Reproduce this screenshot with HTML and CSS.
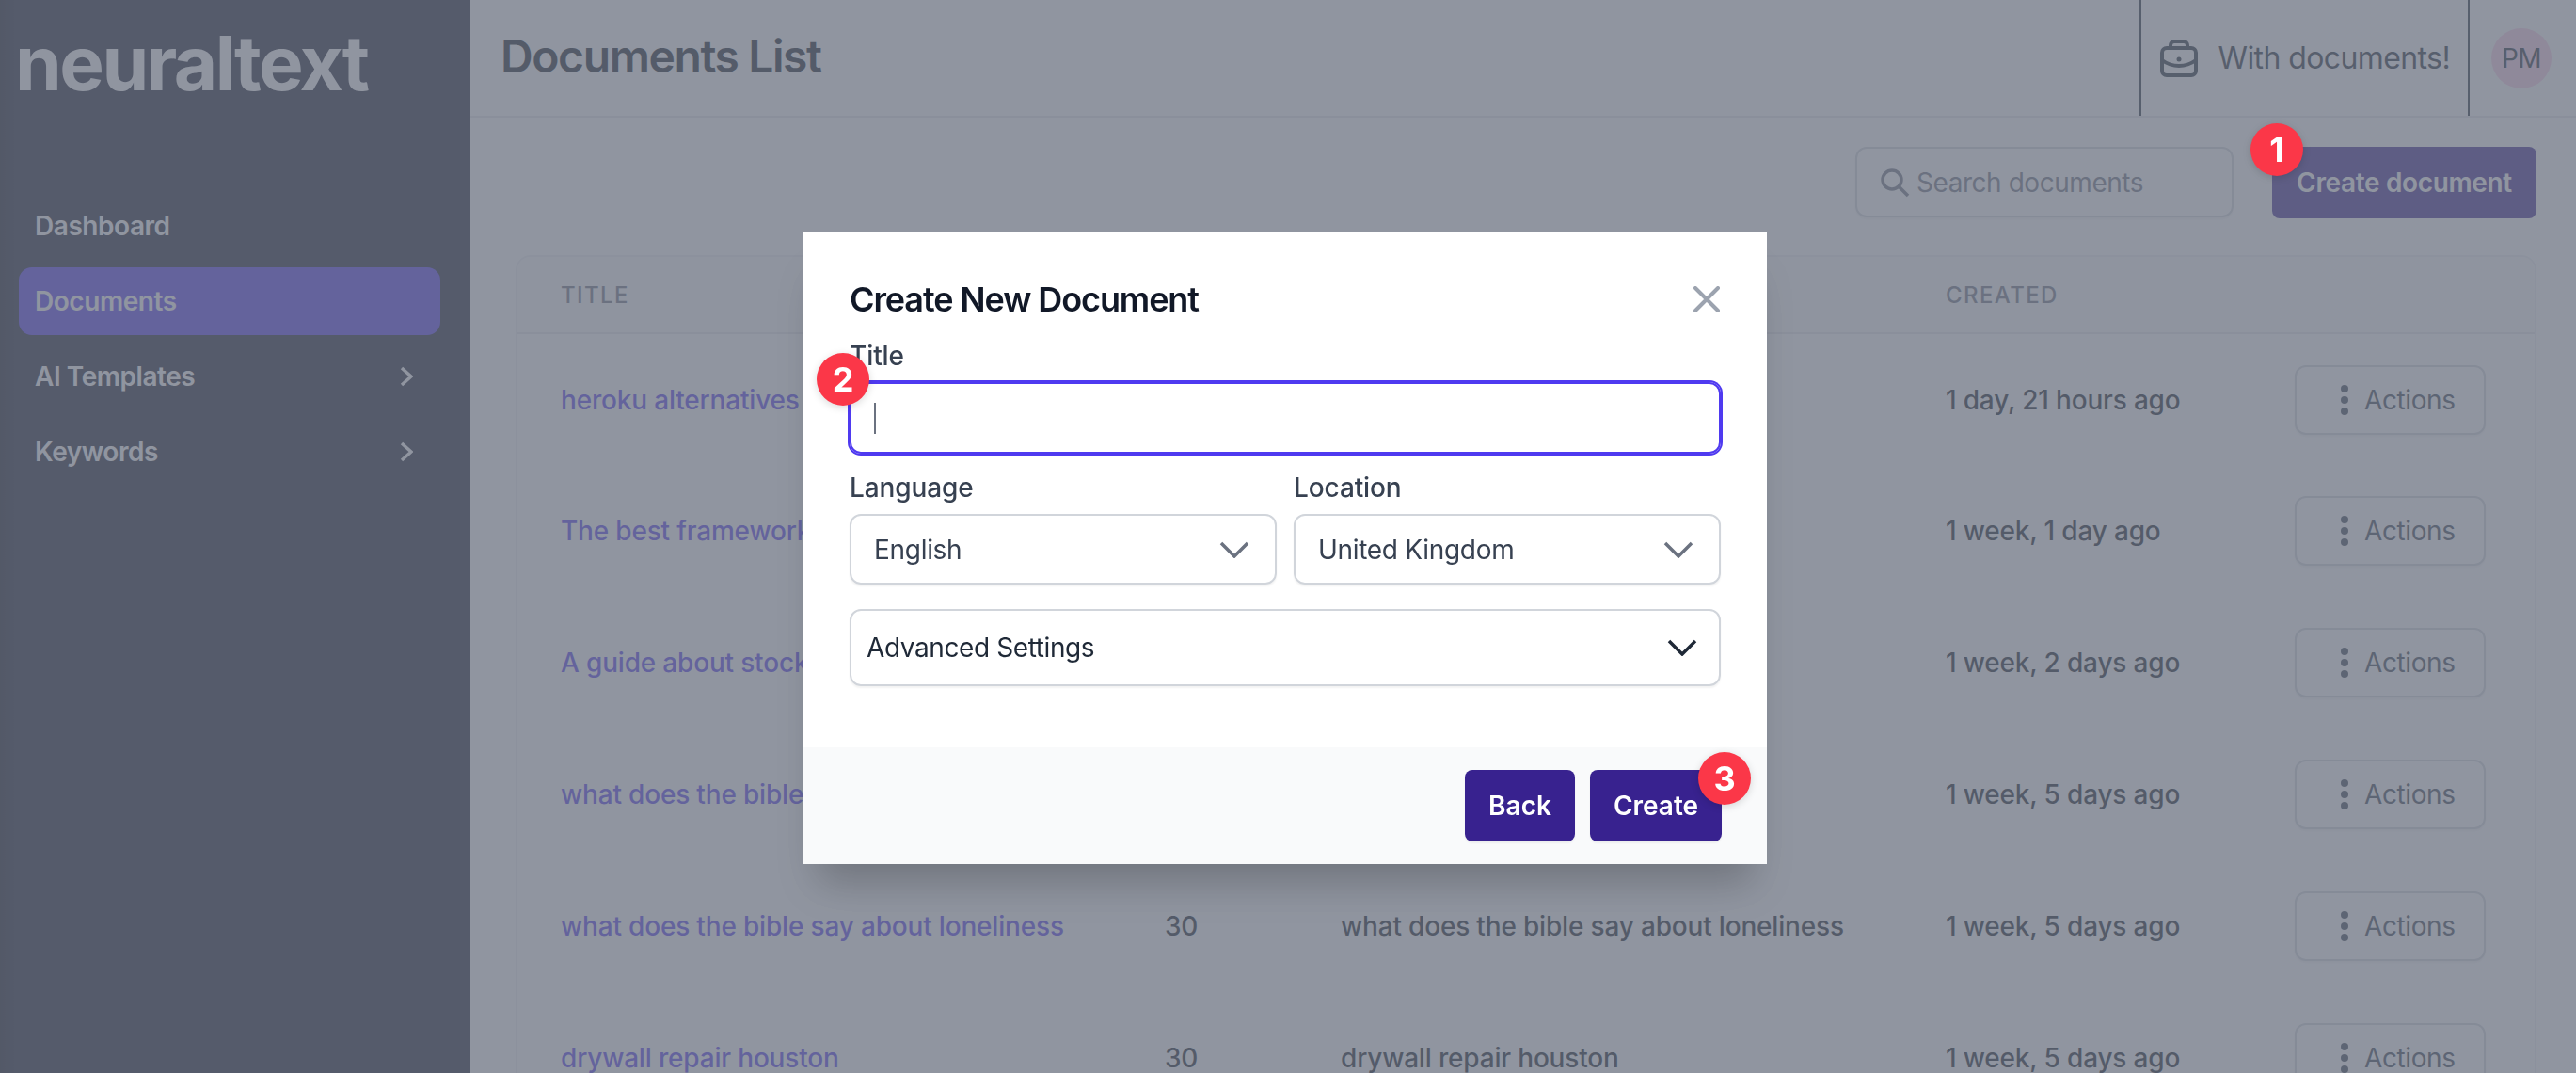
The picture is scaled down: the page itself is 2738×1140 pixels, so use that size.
FILE: index.html
```html
<!DOCTYPE html>
<html lang="en">
<head>
    <meta charset="UTF-8">
    <meta name="viewport" content="width=device-width, initial-scale=1.0">
    <title>neuraltext - Documents List</title>
    <link rel="stylesheet" href="styles.css">
</head>
<body>
    <div class="app">
        <aside class="sidebar">
            <div class="logo">neuraltext</div>
            <nav class="nav">
                <a class="nav-item">Dashboard</a>
                <a class="nav-item active">Documents</a>
                <a class="nav-item">AI Templates
                    <svg class="nav-chevron" viewBox="0 0 14 22"><path d="M2 2l10 9-10 9"/></svg>
                </a>
                <a class="nav-item">Keywords
                    <svg class="nav-chevron" viewBox="0 0 14 22"><path d="M2 2l10 9-10 9"/></svg>
                </a>
            </nav>
        </aside>

        <main class="main">
            <header class="topbar">
                <h1 class="page-title">Documents List</h1>
                <div class="workspace">
                    <svg class="briefcase" viewBox="0 0 40 40">
                        <rect x="2" y="9" width="36" height="29" rx="5"/>
                        <path d="M11 9V6a4 4 0 0 1 4-4h10a4 4 0 0 1 4 4v3"/>
                        <path d="M2 22c11 8 25 8 36 0"/>
                        <circle class="briefcase-dot" cx="20" cy="21" r="2.5"/>
                    </svg>
                    <span>With documents!</span>
                </div>
                <div class="account">
                    <div class="avatar">PM</div>
                </div>
            </header>

            <div class="toolbar">
                <div class="search">
                    <svg class="search-icon" viewBox="0 0 32 32"><circle cx="13" cy="13" r="10"/><path d="M20 20l10 10"/></svg>
                    <span>Search documents</span>
                </div>
                <button class="btn-primary">Create document</button>
            </div>

            <div class="card">
                <table class="doc-table">
                    <colgroup>
                        <col class="col-title">
                        <col class="col-words">
                        <col class="col-keyword">
                        <col class="col-created">
                        <col>
                    </colgroup>
                    <thead>
                        <tr>
                            <th>Title</th>
                            <th>Words</th>
                            <th>Keyword</th>
                            <th>Created</th>
                            <th></th>
                        </tr>
                    </thead>
                    <tbody>
                        <tr>
                            <td><a>heroku alternatives</a></td>
                            <td>30</td>
                            <td>heroku alternatives</td>
                            <td>1 day, 21 hours ago</td>
                            <td><button class="btn-actions"><span class="dots"><i></i><i></i><i></i></span>Actions</button></td>
                        </tr>
                        <tr>
                            <td><a>The best frameworks</a></td>
                            <td>30</td>
                            <td>best frameworks</td>
                            <td>1 week, 1 day ago</td>
                            <td><button class="btn-actions"><span class="dots"><i></i><i></i><i></i></span>Actions</button></td>
                        </tr>
                        <tr>
                            <td><a>A guide about stocks</a></td>
                            <td>30</td>
                            <td>stocks guide</td>
                            <td>1 week, 2 days ago</td>
                            <td><button class="btn-actions"><span class="dots"><i></i><i></i><i></i></span>Actions</button></td>
                        </tr>
                        <tr>
                            <td><a>what does the bible say about lies</a></td>
                            <td>30</td>
                            <td>what does the bible say about lies</td>
                            <td>1 week, 5 days ago</td>
                            <td><button class="btn-actions"><span class="dots"><i></i><i></i><i></i></span>Actions</button></td>
                        </tr>
                        <tr>
                            <td><a>what does the bible say about loneliness</a></td>
                            <td>30</td>
                            <td>what does the bible say about loneliness</td>
                            <td>1 week, 5 days ago</td>
                            <td><button class="btn-actions"><span class="dots"><i></i><i></i><i></i></span>Actions</button></td>
                        </tr>
                        <tr>
                            <td><a>drywall repair houston</a></td>
                            <td>30</td>
                            <td>drywall repair houston</td>
                            <td>1 week, 5 days ago</td>
                            <td><button class="btn-actions"><span class="dots"><i></i><i></i><i></i></span>Actions</button></td>
                        </tr>
                    </tbody>
                </table>
            </div>
        </main>
    </div>

    <div class="overlay">
        <span class="badge badge-one">1</span>

        <div class="modal">
            <div class="modal-body">
                <div class="modal-head">
                    <h2 class="modal-title">Create New Document</h2>
                    <svg class="modal-close" viewBox="0 0 28 28"><path d="M2 2l24 24M26 2L2 26"/></svg>
                </div>

                <label class="field-label field-label-title">Title</label>
                <div class="title-input">
                    <span class="badge badge-two">2</span>
                    <span class="caret"></span>
                </div>

                <div class="field-row">
                    <div class="field">
                        <label class="field-label">Language</label>
                        <div class="select">English
                            <svg class="chevron" viewBox="0 0 32 18"><path d="M2 2l14 14L30 2"/></svg>
                        </div>
                    </div>
                    <div class="field">
                        <label class="field-label">Location</label>
                        <div class="select">United Kingdom
                            <svg class="chevron" viewBox="0 0 32 18"><path d="M2 2l14 14L30 2"/></svg>
                        </div>
                    </div>
                </div>

                <div class="advanced">Advanced Settings
                    <svg class="chevron chevron-dark" viewBox="0 0 32 18"><path d="M2 2l14 14L30 2"/></svg>
                </div>
            </div>

            <div class="modal-foot">
                <button class="btn-modal btn-back">Back</button>
                <button class="btn-modal btn-create">Create
                    <span class="badge badge-three">3</span>
                </button>
            </div>
        </div>
    </div>
</body>
</html>
```

FILE: styles.css
```css
* {
    box-sizing: border-box;
}

html, body {
    height: 100%;
}

body {
    margin: 0;
    font-family: Inter, "Liberation Sans", sans-serif;
    font-size: 28px;
    color: #111827;
    background-color: #fff;
    overflow: hidden;
}

button {
    font-family: inherit;
    font-size: 28px;
    cursor: pointer;
}

.app {
    display: flex;
    height: 100vh;
}

/* sidebar */
.sidebar {
    flex: 0 0 500px;
    padding: 0 32px 0 20px;
    background-color: #14182c;
    background-image: linear-gradient(to right, rgba(0, 0, 0, 0.3), transparent 16px);
    color: #fff;
}

.logo {
    height: 124px;
    margin-left: -4px;
    font-size: 80px;
    font-weight: 700;
    line-height: 134px;
    letter-spacing: -2.5px;
}

.nav {
    margin-top: 80px;
}

.nav-item {
    display: flex;
    align-items: center;
    justify-content: space-between;
    height: 72px;
    margin-bottom: 8px;
    padding: 0 29px 0 17px;
    border-radius: 14px;
    font-weight: 600;
    letter-spacing: -0.45px;
}

.nav-item.active {
    background-color: #4f3af0;
}

.nav-chevron {
    width: 14px;
    height: 22px;
    fill: none;
    stroke: #fff;
    stroke-width: 3.5;
}

/* header */
.main {
    flex: 1;
    min-width: 0;
}

.topbar {
    display: flex;
    align-items: stretch;
    height: 125px;
    border-bottom: 2px solid #e5e7eb;
}

.page-title {
    flex: 1;
    margin: 0;
    padding-left: 32px;
    font-size: 48px;
    font-weight: 600;
    line-height: 120px;
    letter-spacing: -1.4px;
    color: #111827;
}

.workspace {
    display: flex;
    align-items: center;
    gap: 21px;
    padding: 0 19px 0 20px;
    border-left: 2px solid #1f2937;
    border-right: 2px solid #1f2937;
    font-size: 32px;
    letter-spacing: -0.6px;
    color: #1f2937;
}

.briefcase {
    width: 40px;
    height: 40px;
    fill: none;
    stroke: #1f2937;
    stroke-width: 4;
}

.briefcase-dot {
    fill: #1f2937;
    stroke: none;
}

.account {
    display: flex;
    align-items: center;
    padding: 0 26px 0 23px;
}

.avatar {
    display: flex;
    align-items: center;
    justify-content: center;
    width: 64px;
    height: 64px;
    border-radius: 50%;
    background-color: #fbcfe8;
    color: #1f2937;
    letter-spacing: -0.5px;
}

/* toolbar */
.toolbar {
    display: flex;
    justify-content: flex-end;
    gap: 41px;
    padding: 31px 42px 39px 48px;
}

.search {
    display: flex;
    align-items: center;
    gap: 7px;
    width: 402px;
    height: 75px;
    padding-left: 24px;
    border: 2px solid #d1d5db;
    border-radius: 12px;
    box-shadow: 0 2px 2px rgba(0, 0, 0, 0.05);
    color: #6b7280;
    letter-spacing: -0.45px;
}

.search-icon {
    width: 32px;
    height: 32px;
    fill: none;
    stroke: #6b7280;
    stroke-width: 3.5;
}

.btn-primary {
    width: 281px;
    height: 76px;
    padding: 0;
    border: none;
    border-radius: 8px;
    background-color: #38228f;
    color: #fff;
    font-weight: 600;
    letter-spacing: -0.35px;
}

/* table */
.card {
    margin: 0 42px 0 48px;
    border: 2px solid #eef0f3;
    border-radius: 16px;
    overflow: hidden;
}

.doc-table {
    width: 100%;
    border-collapse: collapse;
    table-layout: fixed;
}

.col-title {
    width: 688px;
}

.col-words {
    width: 187px;
}

.col-keyword {
    width: 643px;
}

.col-created {
    width: 371px;
}

.doc-table th {
    height: 81px;
    padding: 0;
    background-color: #f9fafb;
    border-bottom: 2px solid #e5e7eb;
    font-size: 24px;
    font-weight: 500;
    letter-spacing: 1.4px;
    text-align: left;
    text-transform: uppercase;
    color: #6b7280;
}

.doc-table td {
    height: 140px;
    padding: 0;
    font-weight: 500;
    letter-spacing: -0.18px;
    color: #111827;
    white-space: nowrap;
}

.doc-table th:first-child,
.doc-table td:first-child {
    padding-left: 46px;
}

.doc-table a {
    color: #4f3af0;
}

.btn-actions {
    display: flex;
    align-items: center;
    gap: 17px;
    width: 203px;
    height: 74px;
    padding: 0 0 0 47px;
    border: 2px solid #d1d5db;
    border-radius: 12px;
    background-color: #fff;
    box-shadow: 0 2px 2px rgba(0, 0, 0, 0.05);
    color: #374151;
    font-weight: 400;
    letter-spacing: -0.4px;
}

.dots {
    display: flex;
    flex-direction: column;
    gap: 4px;
}

.dots i {
    width: 8px;
    height: 8px;
    border-radius: 50%;
    background-color: #374151;
}

/* modal */
.overlay {
    position: fixed;
    inset: 0;
    display: flex;
    justify-content: center;
    align-items: flex-start;
    padding: 246px 6px 0 0;
    background-color: rgba(107, 114, 128, 0.75);
}

.modal {
    width: 1024px;
    background-color: #fff;
    box-shadow: 0 35px 40px -15px rgba(0, 0, 0, 0.22);
}

.modal-body {
    height: 548px;
    padding: 50px 49px 0;
}

.modal-head {
    display: flex;
    align-items: center;
    justify-content: space-between;
    height: 44px;
    padding-right: 1px;
}

.modal-title {
    margin: 0;
    font-size: 36px;
    font-weight: 600;
    line-height: 44px;
    letter-spacing: -1.1px;
}

.modal-close {
    width: 28px;
    height: 28px;
    fill: none;
    stroke: #9ca3af;
    stroke-width: 4;
    stroke-linecap: round;
}

.field-label {
    display: block;
    margin-bottom: 8px;
    font-weight: 500;
    line-height: 40px;
    letter-spacing: -0.1px;
    color: #374151;
}

.field-label-title {
    margin-top: 18px;
}

.title-input {
    position: relative;
    height: 76px;
    border: 2px solid #4f3af0;
    border-radius: 12px;
    box-shadow: 0 0 0 2px #4f3af0;
}

.caret {
    position: absolute;
    left: 24px;
    top: 20px;
    width: 2px;
    height: 33px;
    background-color: #6b7280;
}

.field-row {
    display: flex;
    gap: 18px;
    margin-top: 16px;
}

.field {
    flex: 1;
}

.select,
.advanced {
    display: flex;
    align-items: center;
    justify-content: space-between;
    border: 2px solid #d1d5db;
    border-radius: 12px;
    box-shadow: 0 2px 2px rgba(0, 0, 0, 0.05);
    color: #374151;
    letter-spacing: -0.3px;
}

.select {
    height: 75px;
    padding: 0 27px 0 24px;
}

.advanced {
    height: 82px;
    margin-top: 26px;
    padding: 0 23px 0 16px;
    color: #1f2937;
    letter-spacing: -0.4px;
}

.chevron {
    width: 32px;
    height: 18px;
    fill: none;
    stroke: #6b7280;
    stroke-width: 3.5;
}

.chevron-dark {
    stroke: #1f2937;
}

.modal-foot {
    display: flex;
    justify-content: flex-end;
    gap: 16px;
    height: 124px;
    padding: 24px 48px;
    background-color: #f9fafb;
}

.btn-modal {
    position: relative;
    height: 76px;
    padding: 0;
    border: none;
    border-radius: 8px;
    background-color: #38228f;
    color: #fff;
    font-weight: 600;
    box-shadow: 0 2px 2px rgba(0, 0, 0, 0.05);
}

.btn-back {
    width: 117px;
}

.btn-create {
    width: 140px;
}

/* tour badges */
.badge {
    position: absolute;
    display: flex;
    align-items: center;
    justify-content: center;
    width: 56px;
    height: 56px;
    border-radius: 50%;
    background-color: #fb3748;
    color: #fff;
    font-size: 36px;
    font-weight: 700;
    box-shadow: 0 2px 8px rgba(0, 0, 0, 0.15);
}

.badge-one {
    left: 2392px;
    top: 131px;
}

.badge-two {
    left: -37px;
    top: -33px;
}

.badge-three {
    left: 115px;
    top: -19px;
}
```
